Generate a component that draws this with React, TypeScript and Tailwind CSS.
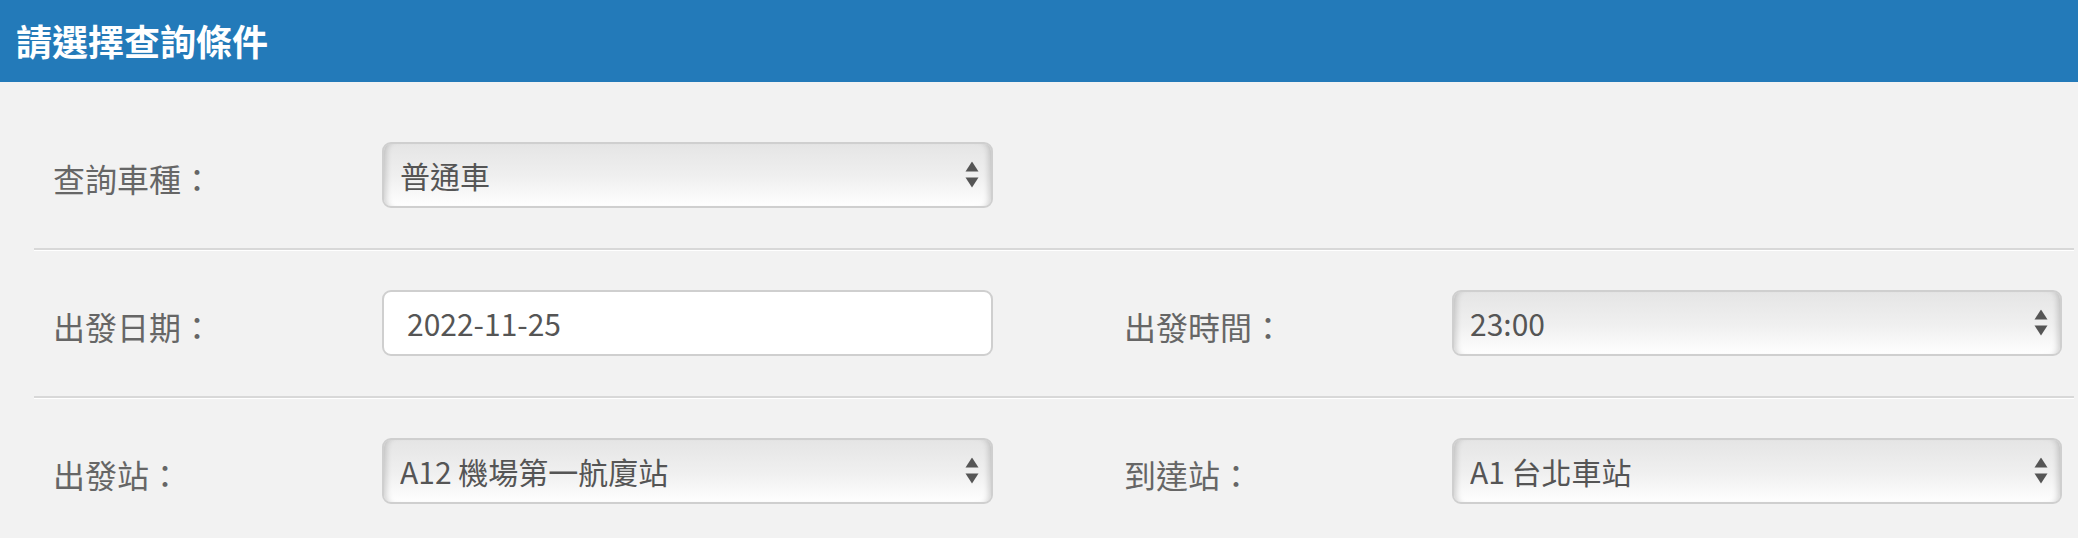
import React from "react";

const fieldFont = {
  fontFamily: '"Noto Sans CJK TC", "Noto Sans", sans-serif',
};

const rows = [
  {
    left: { label: "查詢車種：", type: "select", value: "普通車", options: ["普通車", "直達車"] },
    right: null,
  },
  {
    left: { label: "出發日期：", type: "input", value: "2022-11-25" },
    right: { label: "出發時間：", type: "select", value: "23:00", options: ["22:00", "23:00"] },
  },
  {
    left: { label: "出發站：", type: "select", value: "A12 機場第一航廈站", options: ["A1 台北車站", "A12 機場第一航廈站"] },
    right: { label: "到達站：", type: "select", value: "A1 台北車站", options: ["A1 台北車站", "A12 機場第一航廈站"] },
  },
];

type Field = {
  label: string;
  type: string;
  value: string;
  options?: string[];
};

const Arrows = () => (
  <svg
    className="pointer-events-none absolute right-[14px] top-1/2 -translate-y-1/2"
    width="14"
    height="27"
    viewBox="0 0 14 27"
  >
    <polygon points="7,0 13.5,10 0.5,10" fill="#555" />
    <polygon points="0.5,16 13.5,16 7,26" fill="#555" />
  </svg>
);

const Control: React.FC<{ field: Field; width: string }> = ({ field, width }) => {
  if (field.type === "input") {
    return (
      <input
        type="text"
        readOnly
        value={field.value}
        style={fieldFont}
        className={`${width} h-[66px] rounded-[9px] border-2 border-[#cfcfcf] bg-white pl-[23px] text-[30px] text-[#555] outline-none`}
      />
    );
  }
  return (
    <div className={`relative ${width} h-[66px]`}>
      <select
        defaultValue={field.value}
        style={fieldFont}
        className="h-full w-full appearance-none rounded-[9px] border-2 border-[#cfcfcf] bg-[linear-gradient(to_bottom,#e5e5e5,#f0f0f0_55%,#fefefe)] pl-[16px] text-[30px] text-[#555] shadow-[inset_7px_0_6px_-5px_rgba(0,0,0,0.18),inset_-7px_0_6px_-5px_rgba(0,0,0,0.18)] outline-none"
      >
        {field.options?.map((o) => (
          <option key={o} value={o}>
            {o}
          </option>
        ))}
      </select>
      <Arrows />
    </div>
  );
};

export default function App() {
  return (
    <div className="min-h-[538px] w-[2078px] bg-[#f2f2f2]" style={fieldFont}>
      <div className="flex h-[82px] items-center bg-[#237ab9] px-[16px] pb-[2px]">
        <h1 className="text-[36px] font-bold text-white">請選擇查詢條件</h1>
      </div>

      <div className="ml-[34px] w-[2040px] pt-[20px]">
        {rows.map((row, i) => (
          <div
            key={i}
            className={`grid grid-cols-[329px_611px_131px_328px_610px] items-center py-[40px] pl-[19px] ${
              i < rows.length - 1 ? "border-b-2 border-[#d8d8d8] shadow-[0_1px_0_#ffffff]" : ""
            }`}
          >
            <div className="pt-[6px] text-[32px] text-[#666]">{row.left.label}</div>
            <Control field={row.left} width="w-[611px]" />
            <div />
            {row.right ? (
              <>
                <div className="pt-[6px] text-[32px] text-[#666]">{row.right.label}</div>
                <Control field={row.right} width="w-[610px]" />
              </>
            ) : (
              <>
                <div />
                <div />
              </>
            )}
          </div>
        ))}
      </div>
    </div>
  );
}
